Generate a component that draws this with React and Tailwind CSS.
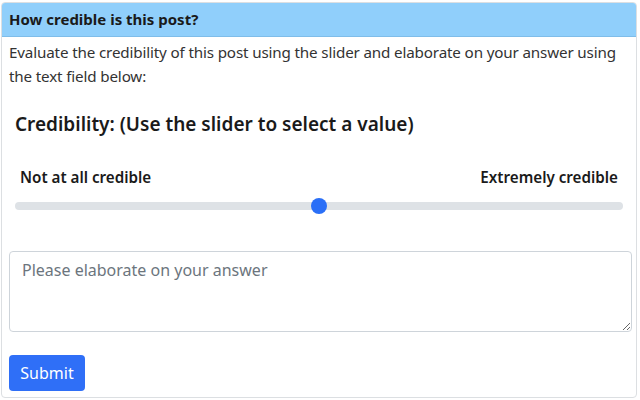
import React, { useState } from "react";

function App() {
  const [text, setText] = useState("");

  return (
    <div className="w-[640px] h-[400px] bg-white pl-[1px] pt-[2px] pr-[3px] pb-[2px] font-['Noto_Sans','Open_Sans',sans-serif] text-[#212529]">
      <div className="h-full border border-[#dcdfe2] rounded-[4px] flex flex-col overflow-hidden">
        <div className="h-[34px] bg-[#90cffb] border-b border-[#7fbde9] px-[7px] flex items-center">
          <h5 className="text-[15px] font-bold text-[#1a1a1a]">How credible is this post?</h5>
        </div>

        <div className="px-[7px] pt-[3px]">
          <p className="text-[15.2px] tracking-[-0.15px] leading-[24px] text-[#333]">
            Evaluate the credibility of this post using the slider and elaborate on your answer using the text field below:
          </p>

          <h4 className="mt-[23px] pl-[6px] text-[19px] leading-[26px] font-semibold text-[#1a1a1a]">
            Credibility: (Use the slider to select a value)
          </h4>

          <div className="mt-[30px] px-[11px] flex justify-between text-[15.2px] leading-[20px] font-semibold text-[#1a1a1a]">
            <span>Not at all credible</span>
            <span>Extremely credible</span>
          </div>

          <div className="mt-[15px] mx-[6px] relative h-[8px]">
            <div className="h-[8px] rounded-full bg-[#dee2e6]" />
            <div className="absolute top-1/2 left-1/2 -translate-x-1/2 -translate-y-1/2 w-[16px] h-[16px] rounded-full bg-[#2a6ff7]" />
          </div>

          <textarea
            value={text}
            onChange={(e) => setText(e.target.value)}
            placeholder="Please elaborate on your answer"
            className="mt-[41px] block w-[623px] h-[81px] border border-[#ced4da] rounded-[4px] px-[12px] py-[6px] text-[16px] leading-[24px] placeholder-[#6c757d] outline-none"
          />

          <button className="mt-[23px] h-[36px] w-[76px] bg-[#2f6ff7] text-white text-[16px] rounded-[4px]">
            Submit
          </button>
        </div>
      </div>
    </div>
  );
}

export default App;
